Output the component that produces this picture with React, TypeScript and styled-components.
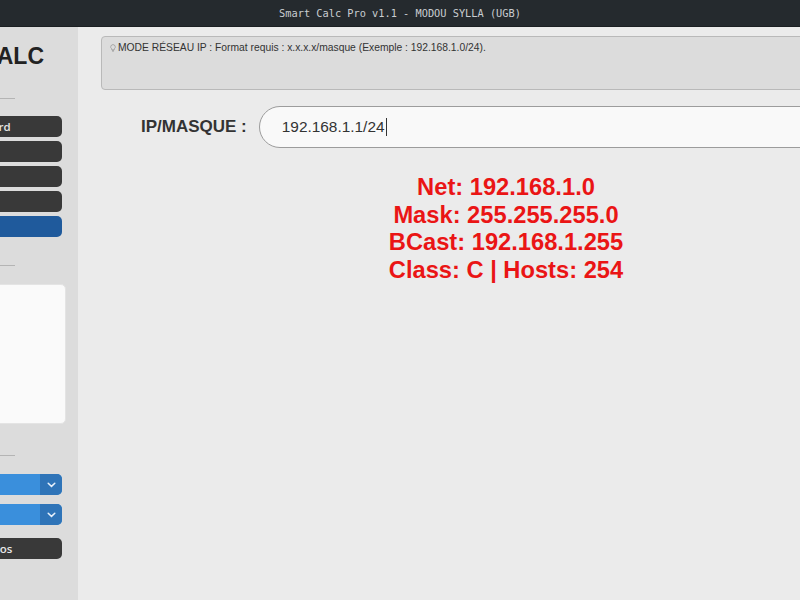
import React from 'react';
import styled, { createGlobalStyle } from 'styled-components';

const GlobalStyle = createGlobalStyle`
  html, body {
    margin: 0;
    padding: 0;
    width: 800px;
    height: 600px;
    overflow: hidden;
    background: #ebebeb;
  }
  * {
    box-sizing: border-box;
  }
`;

const Window = styled.div`
  width: 800px;
  height: 600px;
  display: flex;
  flex-direction: column;
  overflow: hidden;
  font-family: 'Liberation Sans', Arial, sans-serif;
`;

const TitleBar = styled.div`
  height: 27px;
  flex: none;
  background: #252a2e;
  color: #c9cdd1;
  font-family: 'DejaVu Sans Mono', monospace;
  font-size: 10.3px;
  display: flex;
  align-items: center;
  justify-content: center;
  border-bottom: 1px solid #1b1f22;
`;

const Body = styled.div`
  flex: 1;
  display: flex;
  min-height: 0;
`;

const Sidebar = styled.aside`
  width: 78px;
  flex: none;
  background: #dcdcdc;
  overflow: hidden;
`;

const SidebarInner = styled.div`
  width: 220px;
  margin-left: -142px;
  padding: 16px 12px 0;
  display: flex;
  flex-direction: column;
`;

const Brand = styled.h1`
  margin: 0;
  font-size: 23px;
  line-height: 27px;
  font-weight: 700;
  color: #222;
  text-align: center;
`;

const Separator = styled.hr<{ $top: number; $bottom: number }>`
  width: 94px;
  height: 1px;
  border: 0;
  background: #b4b4b4;
  margin: ${(p) => p.$top}px auto ${(p) => p.$bottom}px;
`;

const NavList = styled.div`
  display: flex;
  flex-direction: column;
  gap: 4px;
  margin: 0 4px;
`;

const NavButton = styled.button<{ $active?: boolean }>`
  height: 21px;
  border: 0;
  border-radius: 5px;
  background: ${(p) => (p.$active ? '#1f5a9c' : '#393939')};
  color: #e6e6e6;
  font-family: 'Open Sans', 'Liberation Sans', sans-serif;
  font-size: 11.5px;
  font-weight: 600;
  padding: 0;
`;

const HistoryBox = styled.div`
  height: 140px;
  background: #fafafa;
  border-radius: 5px;
  border: 1px solid #e4e4e4;
`;

const SelectBox = styled.div<{ $gap: number }>`
  height: 21px;
  margin: 0 4px ${(p) => p.$gap}px;
  display: flex;
  border-radius: 5px;
  overflow: hidden;
  background: #3a8fdc;
`;

const SelectValue = styled.div`
  flex: 1;
  color: #fff;
  font-size: 11px;
`;

const SelectArrow = styled.div`
  width: 22px;
  background: #2f74b8;
  display: flex;
  align-items: center;
  justify-content: center;
`;

const Main = styled.main`
  width: 856px;
  flex: none;
  background: #ebebeb;
  padding: 9px 23px 0;
  display: flex;
  flex-direction: column;
`;

const InfoBox = styled.div`
  height: 54px;
  background: #dcdcdc;
  border: 1px solid #b9b9b9;
  border-radius: 4px;
  padding: 4px 8px;
  display: flex;
  align-items: flex-start;
  gap: 2px;
  font-size: 10.3px;
  line-height: 14px;
  color: #333;
`;

const InputRow = styled.div`
  margin-top: 16px;
  padding-left: 40px;
  display: flex;
  align-items: center;
  gap: 12px;
`;

const Label = styled.label`
  font-size: 17px;
  font-weight: 700;
  color: #333;
`;

const InputBox = styled.div`
  flex: 1;
  height: 42px;
  border: 1px solid #9c9c9c;
  border-radius: 21px;
  background: #f9f9f9;
  padding: 0 22px;
  display: flex;
  align-items: center;
  font-size: 15.4px;
  color: #333;
`;

const Caret = styled.span`
  width: 1px;
  height: 18px;
  background: #333;
  margin-left: 1px;
`;

const Results = styled.div`
  margin-top: 26px;
  text-align: center;
  color: #ea1515;
  font-size: 23.7px;
  line-height: 27.7px;
  font-weight: 700;
`;

const ResultLine = styled.div``;

const Bulb = () => (
  <svg width="6" height="8" viewBox="0 0 6 8" style={{ marginTop: 3, flex: 'none' }}>
    <path d="M3 0.6a2.3 2.3 0 0 0-1.3 4.2v1h2.6v-1A2.3 2.3 0 0 0 3 0.6z" fill="none" stroke="#9a9a9a" strokeWidth="0.8" />
    <path d="M2 6.6h2M2.3 7.4h1.4" stroke="#9a9a9a" strokeWidth="0.7" />
  </svg>
);

const Chevron = () => (
  <svg width="9" height="6" viewBox="0 0 9 6">
    <path d="M1.2 1.2 4.5 4.4 7.8 1.2" fill="none" stroke="#e8f1fb" strokeWidth="1.5" strokeLinecap="round" />
  </svg>
);

const results = [
  'Net: 192.168.1.0',
  'Mask: 255.255.255.0',
  'BCast: 192.168.1.255',
  'Class: C | Hosts: 254',
];

const App = () => {
  return (
    <>
      <GlobalStyle />
      <Window>
        <TitleBar>Smart Calc Pro v1.1 - MODOU SYLLA (UGB)</TitleBar>
        <Body>
          <Sidebar>
            <SidebarInner>
              <Brand>SMART CALC</Brand>
              <Separator $top={28} $bottom={17} />
              <NavList>
                <NavButton>Mode Standard</NavButton>
                <NavButton>Sciences</NavButton>
                <NavButton>Unités</NavButton>
                <NavButton>Binaire</NavButton>
                <NavButton $active>Réseau</NavButton>
              </NavList>
              <Separator $top={28} $bottom={18} />
              <HistoryBox />
              <Separator $top={31} $bottom={18} />
              <SelectBox $gap={9}>
                <SelectValue />
                <SelectArrow>
                  <Chevron />
                </SelectArrow>
              </SelectBox>
              <SelectBox $gap={13}>
                <SelectValue />
                <SelectArrow>
                  <Chevron />
                </SelectArrow>
              </SelectBox>
              <NavList>
                <NavButton>Aide &amp; À propos</NavButton>
              </NavList>
            </SidebarInner>
          </Sidebar>
          <Main>
            <InfoBox>
              <Bulb />
              <span>MODE RÉSEAU IP : Format requis : x.x.x.x/masque (Exemple : 192.168.1.0/24).</span>
            </InfoBox>
            <InputRow>
              <Label>IP/MASQUE :</Label>
              <InputBox>
                192.168.1.1/24
                <Caret />
              </InputBox>
            </InputRow>
            <Results>
              {results.map((line) => (
                <ResultLine key={line}>{line}</ResultLine>
              ))}
            </Results>
          </Main>
        </Body>
      </Window>
    </>
  );
};

export default App;
